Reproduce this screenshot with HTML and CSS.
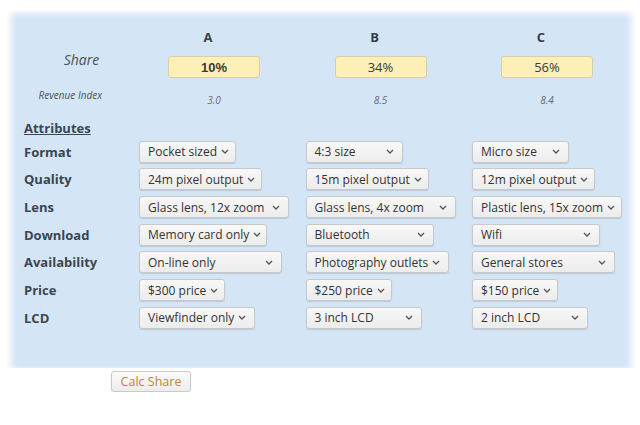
FILE: index.html
```html
<!DOCTYPE html>
<html>
<head>
<meta charset="utf-8">
<link rel="stylesheet" href="styles.css">
</head>
<body>
<div class="panel">
  <div class="grid">
    <div></div>
    <div class="col-head">A</div>
    <div class="col-head">B</div>
    <div class="col-head">C</div>

    <div class="share-label">Share</div>
    <div class="share-cell"><span class="share-box strong">10%</span></div>
    <div class="share-cell"><span class="share-box">34%</span></div>
    <div class="share-cell"><span class="share-box">56%</span></div>

    <div class="rev-label">Revenue Index</div>
    <div class="rev">3.0</div>
    <div class="rev">8.5</div>
    <div class="rev">8.4</div>

    <div class="attr-title"><span>Attributes</span></div>
    <div></div><div></div><div></div>

    <div class="label">Format</div>
    <div class="cell"><span class="sel w-format">Pocket sized<svg viewBox="0 0 8 5"><path d="M1 1l3 3 3-3"/></svg></span></div>
    <div class="cell"><span class="sel w-format">4:3 size<svg viewBox="0 0 8 5"><path d="M1 1l3 3 3-3"/></svg></span></div>
    <div class="cell"><span class="sel w-format">Micro size<svg viewBox="0 0 8 5"><path d="M1 1l3 3 3-3"/></svg></span></div>

    <div class="label">Quality</div>
    <div class="cell"><span class="sel w-quality">24m pixel output<svg viewBox="0 0 8 5"><path d="M1 1l3 3 3-3"/></svg></span></div>
    <div class="cell"><span class="sel w-quality">15m pixel output<svg viewBox="0 0 8 5"><path d="M1 1l3 3 3-3"/></svg></span></div>
    <div class="cell"><span class="sel w-quality">12m pixel output<svg viewBox="0 0 8 5"><path d="M1 1l3 3 3-3"/></svg></span></div>

    <div class="label">Lens</div>
    <div class="cell"><span class="sel w-lens">Glass lens, 12x zoom<svg viewBox="0 0 8 5"><path d="M1 1l3 3 3-3"/></svg></span></div>
    <div class="cell"><span class="sel w-lens">Glass lens, 4x zoom<svg viewBox="0 0 8 5"><path d="M1 1l3 3 3-3"/></svg></span></div>
    <div class="cell"><span class="sel w-lens">Plastic lens, 15x zoom<svg viewBox="0 0 8 5"><path d="M1 1l3 3 3-3"/></svg></span></div>

    <div class="label">Download</div>
    <div class="cell"><span class="sel w-download">Memory card only<svg viewBox="0 0 8 5"><path d="M1 1l3 3 3-3"/></svg></span></div>
    <div class="cell"><span class="sel w-download">Bluetooth<svg viewBox="0 0 8 5"><path d="M1 1l3 3 3-3"/></svg></span></div>
    <div class="cell"><span class="sel w-download">Wifi<svg viewBox="0 0 8 5"><path d="M1 1l3 3 3-3"/></svg></span></div>

    <div class="label">Availability</div>
    <div class="cell"><span class="sel w-avail">On-line only<svg viewBox="0 0 8 5"><path d="M1 1l3 3 3-3"/></svg></span></div>
    <div class="cell"><span class="sel w-avail">Photography outlets<svg viewBox="0 0 8 5"><path d="M1 1l3 3 3-3"/></svg></span></div>
    <div class="cell"><span class="sel w-avail">General stores<svg viewBox="0 0 8 5"><path d="M1 1l3 3 3-3"/></svg></span></div>

    <div class="label">Price</div>
    <div class="cell"><span class="sel w-price">$300 price<svg viewBox="0 0 8 5"><path d="M1 1l3 3 3-3"/></svg></span></div>
    <div class="cell"><span class="sel w-price">$250 price<svg viewBox="0 0 8 5"><path d="M1 1l3 3 3-3"/></svg></span></div>
    <div class="cell"><span class="sel w-price">$150 price<svg viewBox="0 0 8 5"><path d="M1 1l3 3 3-3"/></svg></span></div>

    <div class="label">LCD</div>
    <div class="cell"><span class="sel w-lcd">Viewfinder only<svg viewBox="0 0 8 5"><path d="M1 1l3 3 3-3"/></svg></span></div>
    <div class="cell"><span class="sel w-lcd">3 inch LCD<svg viewBox="0 0 8 5"><path d="M1 1l3 3 3-3"/></svg></span></div>
    <div class="cell"><span class="sel w-lcd">2 inch LCD<svg viewBox="0 0 8 5"><path d="M1 1l3 3 3-3"/></svg></span></div>
  </div>
</div>
<div class="actions"><button class="calc">Calc Share</button></div>
</body>
</html>
```

FILE: styles.css
```css
html, body {
  margin: 0;
  padding: 0;
  background: #ffffff;
  font-family: "Open Sans", "Noto Sans", sans-serif;
  color: #3c4650;
}

.panel {
  margin: 10px 4px 0 6px;
  padding: 15px 0 36px 18px;
  background: #d4e5f6;
  box-shadow:
    inset 8px 0 7px -3px #ffffff,
    inset -8px 0 7px -3px #ffffff,
    inset 0 6px 6px -3px #ffffff;
}

.grid {
  display: grid;
  grid-template-columns: 98.5px 150px 150px 150px;
  column-gap: 16.5px;
  grid-template-rows: 24px 36px 30px 23px;
  grid-auto-rows: 27.67px;
  align-items: center;
}

.col-head {
  text-align: center;
  font-weight: 700;
  font-size: 13px;
  color: #3a3f45;
  padding-right: 12px;
}

.share-label {
  text-align: center;
  font-style: italic;
  font-size: 14px;
  color: #4a535c;
  margin-top: -16px;
  margin-right: -16.5px;
}

.share-cell {
  display: flex;
  justify-content: center;
}

.share-box {
  box-sizing: border-box;
  width: 92px;
  height: 22px;
  display: flex;
  align-items: center;
  justify-content: center;
  background: #fdefb6;
  border: 1px solid #d8cfa8;
  border-radius: 3px;
  font-size: 13px;
  color: #3b3a36;
}

.share-box.strong {
  font-weight: 700;
  font-family: "Liberation Sans", Arial, sans-serif;
}

.rev-label {
  text-align: center;
  font-style: italic;
  font-size: 10px;
  color: #4a535c;
  padding-right: 6px;
  margin-top: -10px;
}

.rev {
  text-align: center;
  font-style: italic;
  font-size: 10px;
  color: #666c73;
}

.attr-title span {
  font-weight: 700;
  font-size: 13px;
  text-decoration: underline;
  color: #3c4650;
}

.label {
  font-weight: 700;
  font-size: 13px;
  color: #3c4650;
}

.cell {
  display: flex;
}

.sel {
  box-sizing: border-box;
  height: 22px;
  display: flex;
  align-items: center;
  justify-content: space-between;
  padding: 0 8px 0 8px;
  background: linear-gradient(#f8f8f8, #ececec);
  border: 1px solid #c6c8ca;
  border-radius: 3px;
  box-shadow: 0 1px 1px rgba(0, 0, 0, 0.12);
  font-size: 12px;
  color: #333333;
  white-space: nowrap;
}

.sel svg {
  width: 8px;
  height: 5px;
  flex: none;
  margin-left: 4px;
}

.sel svg path {
  fill: none;
  stroke: #555555;
  stroke-width: 1.3;
}

.w-format { width: 97px; }
.w-quality { width: 123px; }
.w-lens { width: 150px; }
.w-download { width: 128px; }
.w-avail { width: 143px; }
.w-price { width: 86px; }
.w-lcd { width: 116px; }

.actions {
  padding: 3px 0 0 111px;
}

.calc {
  display: block;
  box-sizing: border-box;
  width: 80px;
  height: 21px;
  padding: 0;
  background: linear-gradient(#fbfbfb, #ededed);
  border: 1px solid #c9c9c9;
  border-radius: 3px;
  box-shadow: 0 1px 1px rgba(0, 0, 0, 0.1);
  font-family: "Open Sans", "Noto Sans", sans-serif;
  font-size: 12.5px;
  color: #b8892e;
}
```
